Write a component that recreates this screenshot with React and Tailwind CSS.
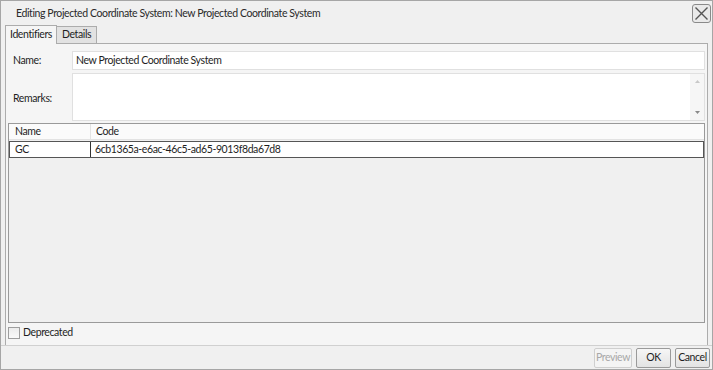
import React from "react";

const font = { fontFamily: 'Lato, "Noto Sans", sans-serif' };

function CloseButton() {
  return (
    <button className="w-[19px] h-[19px] border border-[#8a8a8a] rounded-[3px] bg-[#e9e9e9] flex items-center justify-center">
      <svg width="15" height="15" viewBox="0 0 15 15">
        <path d="M1.5 1.5 L13.5 13.5 M13.5 1.5 L1.5 13.5" stroke="#555" strokeWidth="1.4" />
      </svg>
    </button>
  );
}

function Scrollbar() {
  return (
    <div className="w-[14px] h-full bg-[#f6f6f6] flex flex-col items-center justify-between py-[6px]">
      <svg width="5" height="3" viewBox="0 0 5 3"><path d="M0 3 L2.5 0 L5 3Z" fill="#c8c8c8" /></svg>
      <svg width="5" height="3" viewBox="0 0 5 3"><path d="M0 0 L2.5 3 L5 0Z" fill="#8a8a8a" /></svg>
    </div>
  );
}

export default function App() {
  return (
    <div className="w-[713px] h-[370px] bg-[#f0f0f0] border border-[#a6a6a6] flex flex-col text-[10.5px] tracking-[-0.4px] text-[#1e1e1e]" style={font}>
      {/* Title */}
      <div className="h-[24px] flex items-center justify-between pl-[15px] pr-[1px] pt-[1px]">
        <span className="text-[#2a2a2a]">Editing Projected Coordinate System: New Projected Coordinate System</span>
        <CloseButton />
      </div>

      {/* Tabs */}
      <div className="flex items-end h-[18px] pl-[4px]">
        <div className="h-[19px] px-[4px] flex items-center bg-[#f5f5f5] border border-[#acacac] border-b-0 relative z-10 -mb-px">Identifiers</div>
        <div className="h-[17px] px-[5px] flex items-center bg-[#e2e2e2] border border-[#acacac] border-l-0 border-b-0">Details</div>
      </div>

      {/* Panel */}
      <div className="flex-1 mx-[4px] border border-[#acacac] bg-[#f5f5f5] flex flex-col px-[2px] pt-[7px] pb-[2px]">
        <div className="flex items-center h-[19px] mb-[3px]">
          <span className="w-[64px] pl-[5px]">Name:</span>
          <div className="flex-1 h-full bg-white border border-[#e0e0e0] flex items-center px-[3px]">New Projected Coordinate System</div>
        </div>
        <div className="flex items-center h-[48px] mb-[2px]">
          <span className="w-[64px] pl-[5px] pt-[3px]">Remarks:</span>
          <div className="flex-1 h-full bg-white border border-[#e0e0e0] flex justify-end">
            <Scrollbar />
          </div>
        </div>

        {/* Grid */}
        <div className="flex-1 border border-[#9a9a9a] bg-[#f0f0f0] flex flex-col">
          <div className="flex h-[16px] bg-[#fbfbfb] border-b border-[#e3e3e3]">
            <div className="w-[82px] pl-[6px] border-r border-[#e3e3e3] flex items-center">Name</div>
            <div className="flex-1 pl-[5px] flex items-center">Code</div>
          </div>
          <div className="flex h-[17px] bg-white border border-[#555] mt-px">
            <div className="w-[81px] pl-[5px] border-r border-[#333] flex items-center">GC</div>
            <div className="flex-1 pl-[4px] flex items-center">6cb1365a-e6ac-46c5-ad65-9013f8da67d8</div>
          </div>
        </div>

        <div className="flex items-center h-[20px] gap-[3px]">
          <div className="w-[12px] h-[12px] border border-[#9e9e9e] bg-gradient-to-b from-[#ececec] to-[#fafafa]" />
          <span>Deprecated</span>
        </div>
      </div>

      {/* Footer */}
      <div className="h-[24px] flex items-center justify-end gap-[4px] pr-[2px] border-t border-[#d0d0d0] mt-[-1px]">
        <button className="h-[20px] w-[38px] border border-[#cfcfcf] rounded-[2px] bg-[#f4f4f4] text-[#a8a8a8]">Preview</button>
        <button className="h-[20px] w-[35px] border border-[#9a9a9a] rounded-[2px] bg-gradient-to-b from-[#f6f6f6] to-[#e3e3e3]">OK</button>
        <button className="h-[20px] w-[35px] border border-[#9a9a9a] rounded-[2px] bg-gradient-to-b from-[#f6f6f6] to-[#e3e3e3]">Cancel</button>
      </div>
    </div>
  );
}
